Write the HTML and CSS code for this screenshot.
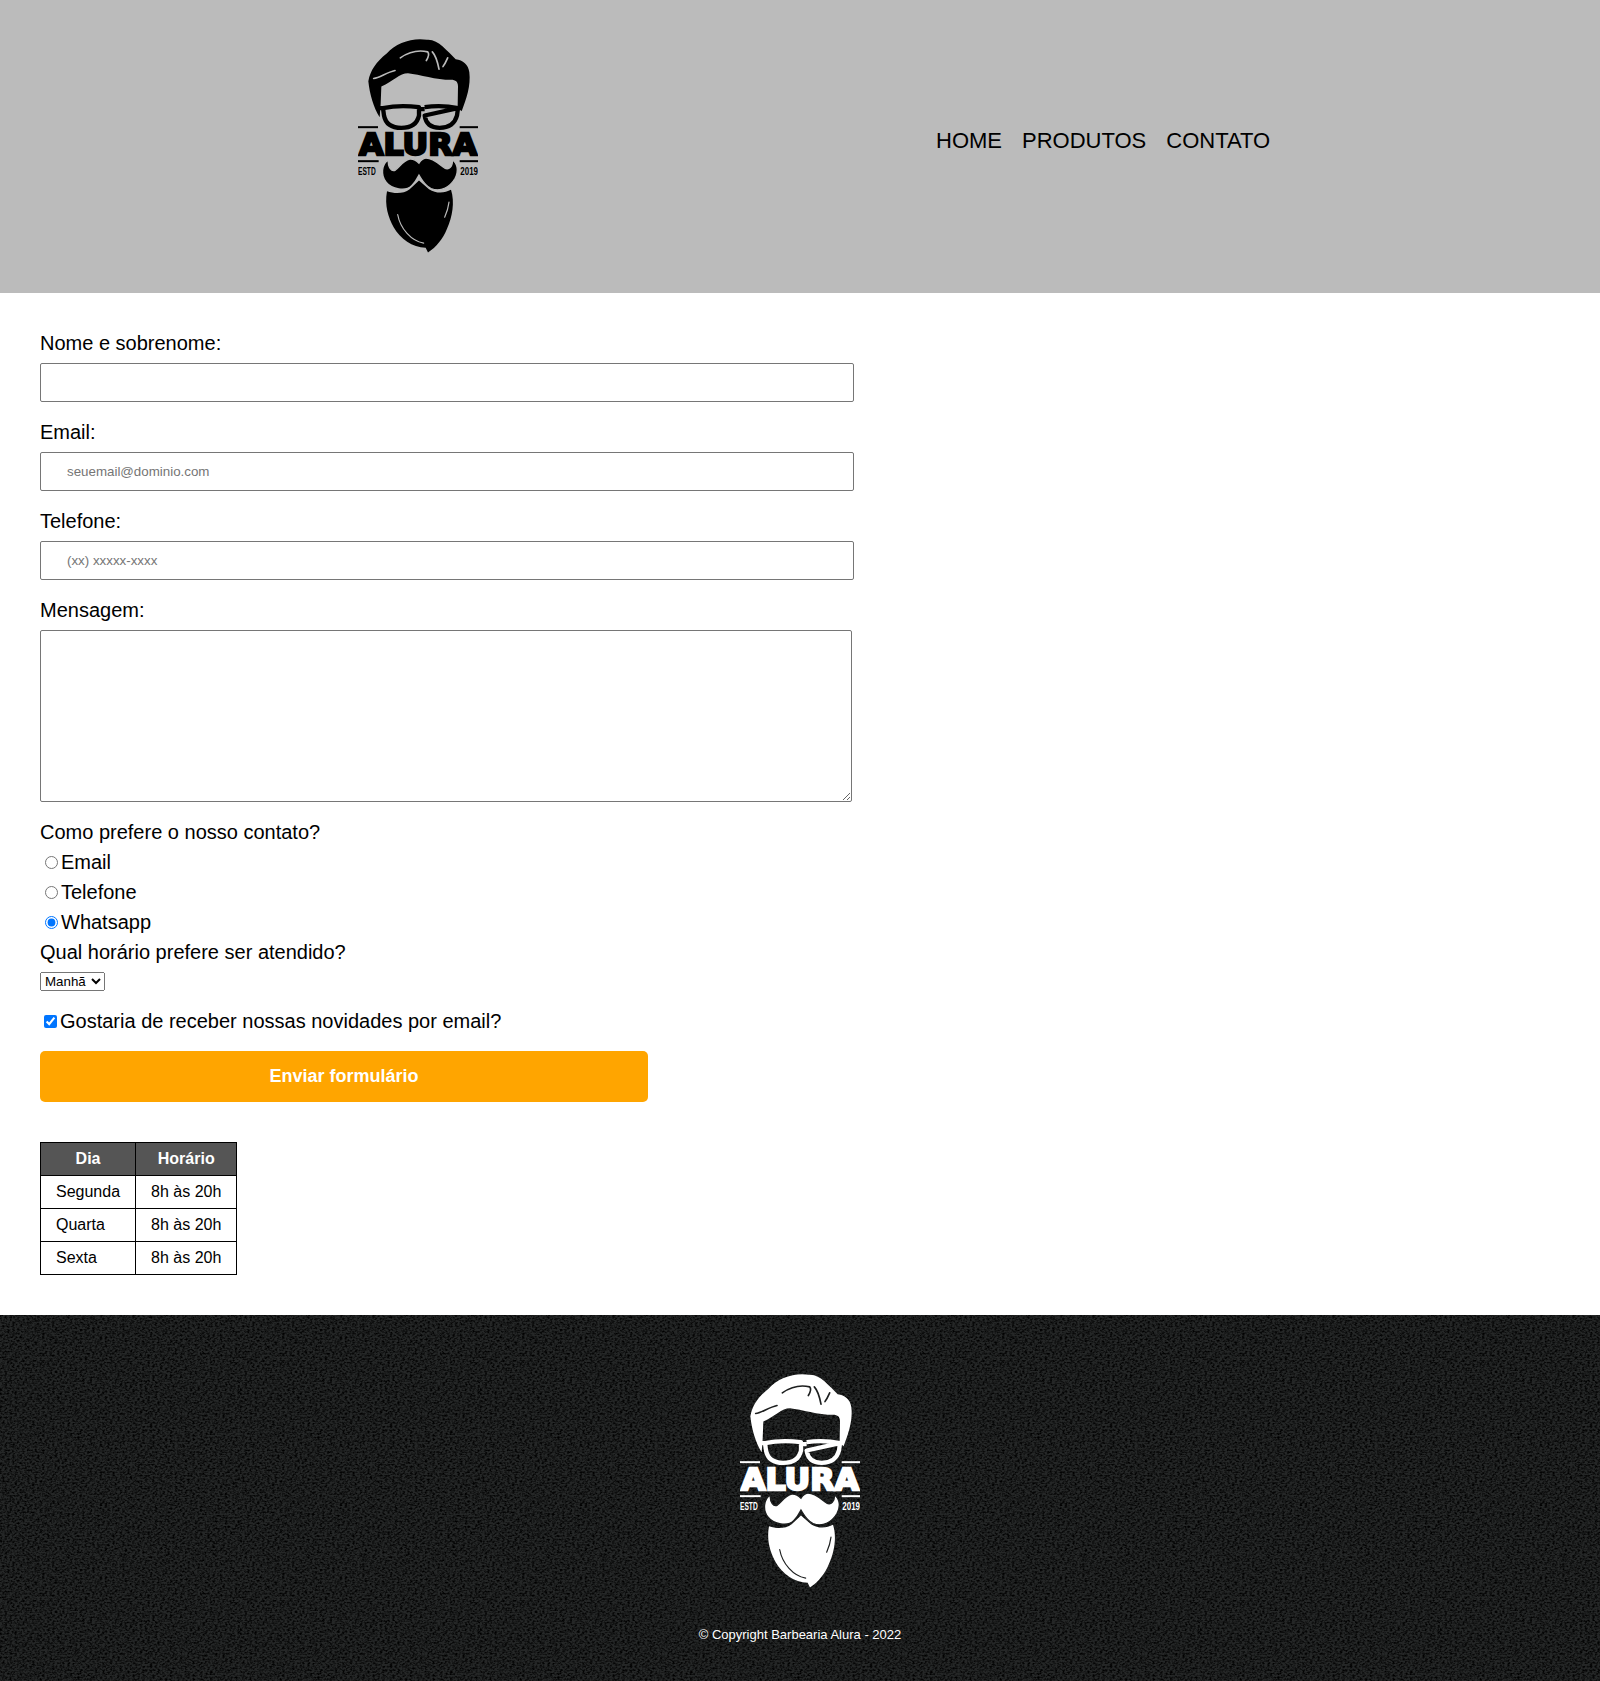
FILE: index.html
```html
<!DOCTYPE html>
<html lang="pt-br">
<head>
  <meta charset="UTF-8">
  <title>Barbearia Alura - Contato</title>
  <link rel="stylesheet" href="styles.css">
</head>
<body>

  <svg class="sprite" aria-hidden="true">
    <symbol id="logo" viewBox="85 50 360 650">
      <path class="logo-cheio" d="M116 182 C122 150 138 125 172 98 C198 68 250 50 292 58 C325 55 352 92 378 116 C400 118 416 132 419 155 C424 195 410 235 396 272 L384 258 L385 198 C385 184 378 178 364 178 C320 178 270 162 235 158 C210 158 190 182 155 198 L153 250 L150 290 C132 262 120 220 116 182 Z"/>
      <path class="logo-traco" d="M132 174 C150 172 170 156 196 150"/>
      <path class="logo-traco" d="M212 112 C238 94 268 88 294 94 C300 100 296 110 290 120"/>
      <path class="logo-traco" d="M308 94 C320 107 324 125 328 146"/>
      <path class="logo-traco" d="M340 138 C347 130 350 120 354 112"/>
      <path class="logo-oculos" d="M150 263 L160 263 Q210 252 268 260 L268 285 Q260 322 215 322 Q170 322 163 285 L160 263 M268 266 L285 266 M285 260 Q335 252 385 263 L395 263 M385 263 L382 285 Q372 322 330 322 Q290 322 285 285 Z"/>
      <rect class="logo-cheio" x="85" y="317" width="60" height="6"/>
      <rect class="logo-cheio" x="390" y="317" width="55" height="6"/>
      <rect class="logo-cheio" x="85" y="419" width="62" height="6"/>
      <rect class="logo-cheio" x="390" y="419" width="55" height="6"/>
      <text class="logo-nome" x="88" y="402" textLength="354" lengthAdjust="spacingAndGlyphs">ALURA</text>
      <text class="logo-ano" x="85" y="462" textLength="53" lengthAdjust="spacingAndGlyphs">ESTD</text>
      <text class="logo-ano" x="392" y="462" textLength="53" lengthAdjust="spacingAndGlyphs">2019</text>
      <path class="logo-cheio" d="M172 512 C195 520 222 520 240 506 L268 480 L298 506 C320 520 345 518 364 508 C376 545 368 590 352 625 C340 655 320 680 295 696 L288 682 C248 680 212 655 192 620 C176 590 164 555 172 512 Z"/>
      <path class="logo-traco logo-fino" d="M204 582 C212 625 245 662 282 668"/>
      <path class="logo-traco logo-fino" d="M358 545 C356 562 352 575 345 590"/>
      <path class="logo-bigode" d="M176 418 C156 430 152 465 170 486 C186 506 228 514 246 496 C256 486 263 474 268 464 C276 476 284 494 304 504 C335 516 362 498 376 474 C388 452 384 430 368 418 C370 438 358 450 344 442 C325 428 308 412 288 413 C280 414 273 420 268 428 C260 420 250 415 240 416 C222 420 212 436 198 448 C186 456 174 440 176 418 Z"/>
    </symbol>
  </svg>

  <header class="cabecalho">
    <svg class="logo logo-preto" role="img" aria-label="Alura"><use href="#logo"/></svg>
    <nav class="menu">
      <a href="#">HOME</a>
      <a href="#">PRODUTOS</a>
      <a href="#">CONTATO</a>
    </nav>
  </header>

  <main class="conteudo">
    <form class="formulario">
      <label class="rotulo" for="nome">Nome e sobrenome:</label>
      <input class="campo" type="text" id="nome">

      <label class="rotulo" for="email">Email:</label>
      <input class="campo" type="email" id="email" placeholder="seuemail@dominio.com">

      <label class="rotulo" for="telefone">Telefone:</label>
      <input class="campo" type="tel" id="telefone" placeholder="(xx) xxxxx-xxxx">

      <label class="rotulo" for="mensagem">Mensagem:</label>
      <textarea class="mensagem" id="mensagem"></textarea>

      <div class="opcoes">
        <div>Como prefere o nosso contato?</div>
        <label class="opcao"><input type="radio" name="contato">Email</label>
        <label class="opcao"><input type="radio" name="contato">Telefone</label>
        <label class="opcao"><input type="radio" name="contato" checked>Whatsapp</label>
        <div>Qual horário prefere ser atendido?</div>
      </div>

      <select class="horario">
        <option>Manhã</option>
        <option>Tarde</option>
        <option>Noite</option>
      </select>

      <label class="novidades"><input type="checkbox" checked>Gostaria de receber nossas novidades por email?</label>

      <button class="enviar" type="button">Enviar formulário</button>
    </form>

    <table class="tabela">
      <thead>
        <tr><th>Dia</th><th>Horário</th></tr>
      </thead>
      <tbody>
        <tr><td>Segunda</td><td>8h às 20h</td></tr>
        <tr><td>Quarta</td><td>8h às 20h</td></tr>
        <tr><td>Sexta</td><td>8h às 20h</td></tr>
      </tbody>
    </table>
  </main>

  <footer class="rodape">
    <svg class="logo logo-branco" role="img" aria-label="Alura"><use href="#logo"/></svg>
    <p class="copyright">© Copyright Barbearia Alura - 2022</p>
  </footer>

</body>
</html>
```

FILE: styles.css
```css
body {
  margin: 0;
  background: white;
  color: black;
  font-family: "Liberation Sans", Arial, sans-serif;
}
.sprite {
  display: none;
}
.logo {
  display: block;
  width: 120px;
  height: 217px;
}
.logo-preto {
  --cor: #000;
  --fundo: #bbb;
}
.logo-branco {
  --cor: #fff;
  --fundo: #1d1f1f;
}
.logo-cheio {
  fill: var(--cor);
}
.logo-traco {
  fill: none;
  stroke: var(--fundo);
  stroke-width: 5;
  stroke-linecap: round;
}
.logo-fino {
  stroke-width: 3.5;
}
.logo-oculos {
  fill: none;
  stroke: var(--cor);
  stroke-width: 13;
  stroke-linejoin: round;
}
.logo-bigode {
  fill: var(--cor);
  stroke: var(--fundo);
  stroke-width: 4;
}
.logo-nome {
  fill: var(--cor);
  stroke: var(--cor);
  stroke-width: 7;
  font-family: "DejaVu Sans", sans-serif;
  font-weight: bold;
  font-size: 91px;
}
.logo-ano {
  fill: var(--cor);
  font-family: "Liberation Sans", sans-serif;
  font-weight: bold;
  font-size: 30px;
}

.cabecalho {
  display: flex;
  align-items: center;
  padding: 37px 0 39px 358px;
  background: #bbb;
}
.menu {
  display: flex;
  gap: 20px;
  margin: 0 0 10px 458px;
}
.menu a {
  color: black;
  font-size: 22px;
  text-decoration: none;
}

.conteudo {
  padding: 39px 40px 40px;
}
.rotulo {
  display: block;
  margin-bottom: 8px;
  font-size: 20px;
}
.campo {
  display: block;
  box-sizing: border-box;
  width: 814px;
  height: 39px;
  margin-bottom: 19px;
  padding: 0 26px;
  border: 1px solid #767676;
  border-radius: 2px;
}
.mensagem {
  display: block;
  box-sizing: border-box;
  width: 812px;
  height: 172px;
  margin-bottom: 15px;
  border: 1px solid #767676;
  border-radius: 2px;
}
.opcoes {
  font-size: 20px;
  line-height: 30px;
}
.opcao {
  display: block;
}
.horario {
  display: block;
  width: 65px;
  margin: 5px 0 15px;
}
.novidades {
  display: block;
  font-size: 20px;
  line-height: 30px;
}
.enviar {
  display: block;
  width: 608px;
  height: 51px;
  margin: 15px 0 40px;
  border: none;
  border-radius: 5px;
  background: orange;
  color: white;
  font-family: inherit;
  font-size: 18px;
  font-weight: bold;
}
.tabela {
  border-collapse: collapse;
  font-size: 16px;
}
.tabela th,
.tabela td {
  padding: 7px 15px;
  border: 1px solid black;
  text-align: left;
}
.tabela th {
  background: #555;
  color: white;
  text-align: center;
}

.rodape {
  display: flex;
  flex-direction: column;
  align-items: center;
  height: 366px;
  box-sizing: border-box;
  padding-top: 57px;
  background-color: #252727;
  background-image: url("data:image/svg+xml,%3Csvg xmlns='http://www.w3.org/2000/svg' width='240' height='240'%3E%3Cfilter id='n'%3E%3CfeTurbulence type='fractalNoise' baseFrequency='.4 .55' numOctaves='2' stitchTiles='stitch'/%3E%3CfeColorMatrix values='0 0 0 0 0 0 0 0 0 0 0 0 0 0 0 0 0 0 -2.4 1.5'/%3E%3C/filter%3E%3Crect width='240' height='240' filter='url(%23n)'/%3E%3C/svg%3E");
  color: white;
}
.copyright {
  margin: 38px 0 0;
  font-size: 13px;
}
```
